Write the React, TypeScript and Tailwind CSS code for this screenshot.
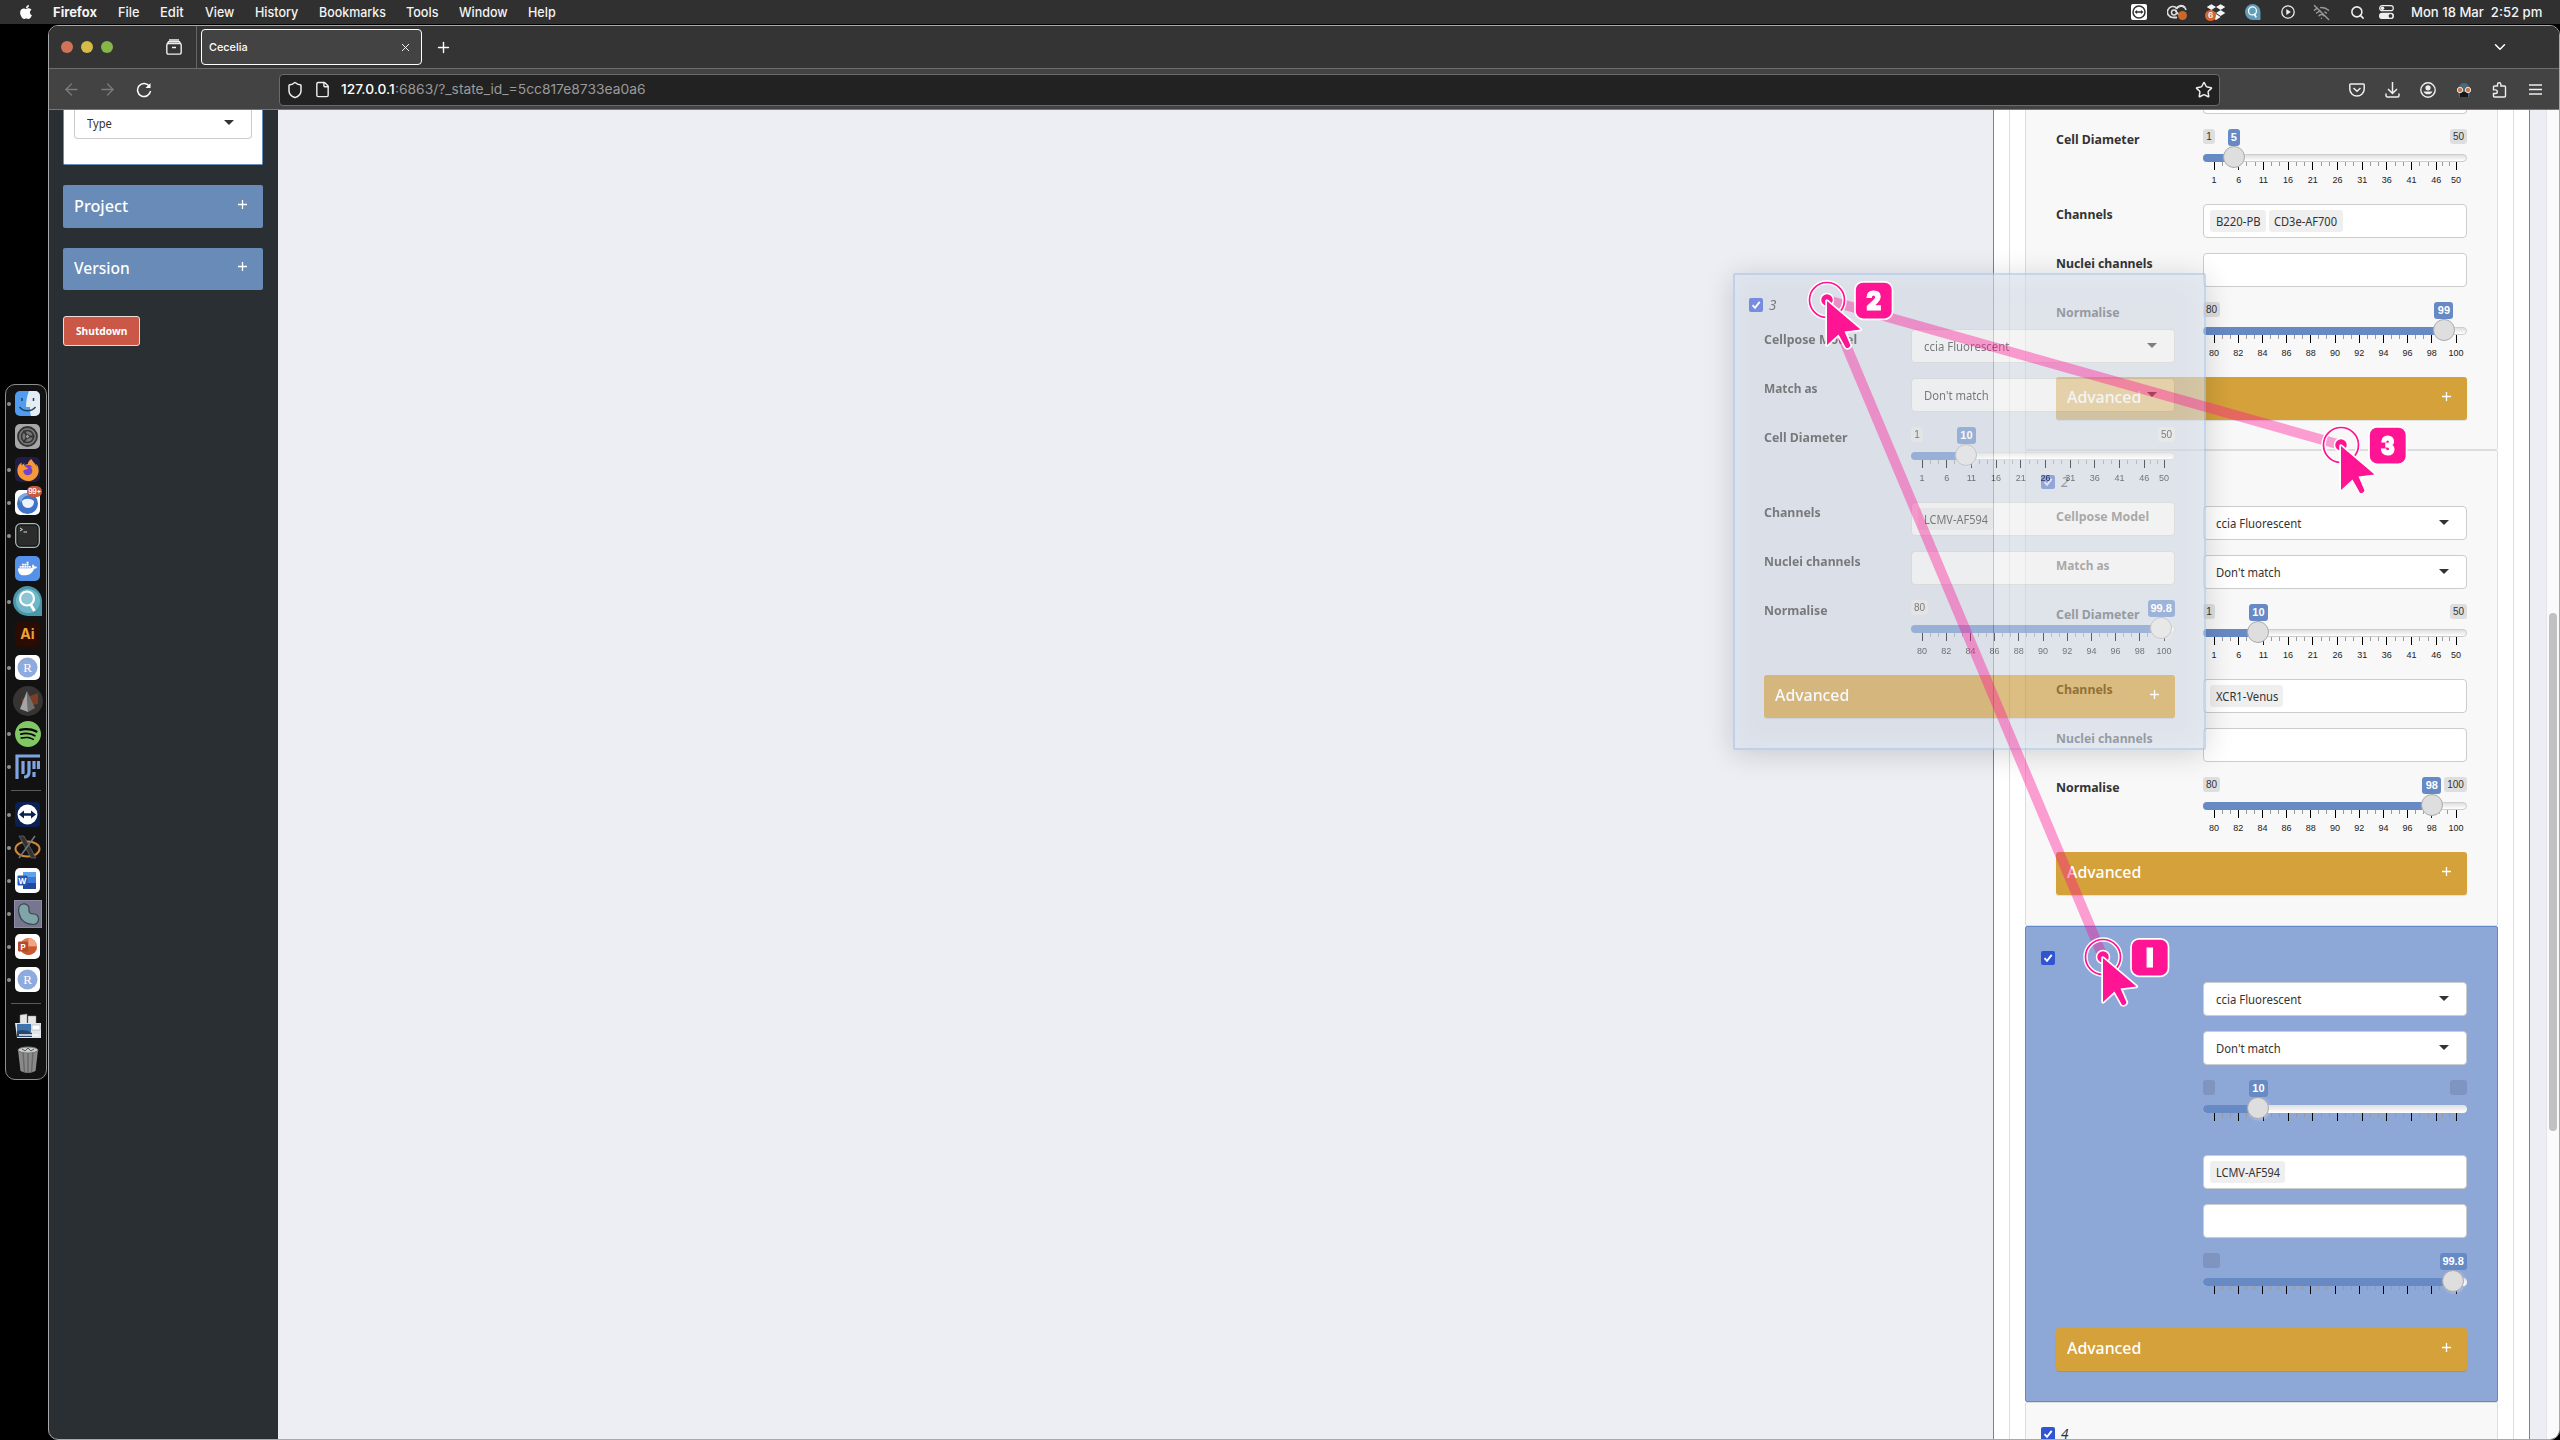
import React, { useLayoutEffect, useRef, useState } from 'react';
import { SiFirefoxbrowser, SiDocker, SiSpotify } from 'react-icons/si';
import { FaApple, FaDropbox } from 'react-icons/fa';
import {
  ArrowLeft, ArrowRight, ChevronDown, File, Plus, Search, Shield, Star, X, WifiOff,
} from 'lucide-react';

/* Text squeezed or stretched horizontally so that it fills a given width. */
function Fit({ w, className = '', children }: { w: number; className?: string; children: React.ReactNode }) {
  const ref = useRef<HTMLSpanElement>(null);
  const [scale, setScale] = useState(1);
  useLayoutEffect(() => {
    const measure = () => {
      if (ref.current && ref.current.offsetWidth) setScale(w / ref.current.offsetWidth);
    };
    measure();
    document.fonts.ready.then(measure);
  }, [w]);
  return (
    <span className={`block shrink-0 ${className}`} style={{ width: w }}>
      <span ref={ref} className="inline-block origin-left whitespace-pre" style={{ transform: `scaleX(${scale})` }}>
        {children}
      </span>
    </span>
  );
}

const menus: [string, number][] = [
  ['File', 21.5], ['Edit', 24], ['View', 29.5], ['History', 43.5], ['Bookmarks', 67],
  ['Tools', 32], ['Window', 49], ['Help', 28],
];

function MenuBar() {
  return (
    <div className="flex h-6 shrink-0 items-center bg-[#303030] pl-[19px] pr-[18px] font-['Inter'] text-[13px] leading-6 text-[#f4f4f4]">
      <FaApple className="mr-[20px] h-[16px] w-[14px] text-white" />
      <Fit w={44} className="mr-[21px] font-bold">Firefox</Fit>
      <div className="flex gap-[20.5px] font-medium">
        {menus.map(([t, w]) => <Fit key={t} w={w}>{t}</Fit>)}
      </div>
      <div className="ml-auto flex items-center">
        <svg className="mr-5 h-4 w-4" viewBox="0 0 16 16">
          <rect width="16" height="16" rx="2" fill="#fff" />
          <circle cx="8" cy="8" r="6" fill="none" stroke="#303030" strokeWidth="1.5" />
          <path d="M3.500 8l2.600-2v1.300h3.800V6l2.600 2-2.600 2V8.700H6.100V10z" fill="#303030" />
        </svg>
        <svg className="mr-[18px] h-4 w-[21px]" viewBox="0 0 21 16">
          <path d="M6 13.500a5.500 5.500 0 1 1 4-9.200A5 5 0 0 1 19 6" fill="none" stroke="#ddd" strokeWidth="1.600" />
          <path d="M9 5a5.500 5.500 0 0 1 9-1.500M10 13.500H6" fill="none" stroke="#ddd" strokeWidth="1.800" />
          <circle cx="7" cy="8.500" r="2.500" fill="none" stroke="#ddd" strokeWidth="1.500" />
          <path d="M8 6l4 5" stroke="#ddd" strokeWidth="1.500" />
          <circle cx="15.500" cy="11.500" r="4.500" fill="#c9682a" />
        </svg>
        <div className="relative mr-[19px] h-[18px] w-[20px]">
          <FaDropbox className="absolute left-0 top-0 h-[18px] w-[20px]" />
          <span className="absolute -left-[1px] top-[7px] h-[11px] w-[11px] rounded-full bg-[#d0652f] text-center text-[8px] font-bold leading-[11px]">6</span>
        </div>
        <svg className="mr-[20px] h-4 w-4" viewBox="0 0 30 30">
          <path d="M15 0a15 15 0 1 0 0 30h14V15A15 15 0 0 0 15 0z" fill="#5f9dba" />
          <circle cx="14" cy="13" r="7.500" fill="none" stroke="#fff" strokeWidth="2.500" />
          <path d="M17 18l4 7" stroke="#fff" strokeWidth="3" />
        </svg>
        <svg className="mr-[18px] h-[14px] w-[14px]" viewBox="0 0 14 14">
          <circle cx="7" cy="7" r="6.200" fill="none" stroke="#eee" strokeWidth="1.300" />
          <path d="M5.300 4l4.500 3-4.500 3z" fill="#eee" />
        </svg>
        <WifiOff className="mr-[20px] h-[17px] w-[17px] text-[#999]" strokeWidth={2} />
        <Search className="mr-[14px] h-[15px] w-[15px] text-[#eee]" strokeWidth={2.5} />
        <svg className="mr-[17px] h-[14px] w-[15px]" viewBox="0 0 15 14">
          <rect x=".7" y=".7" width="13.600" height="5" rx="2.500" fill="none" stroke="#eee" strokeWidth="1.200" />
          <circle cx="3.500" cy="3.200" r="1.800" fill="#eee" />
          <rect x="0" y="7.800" width="15" height="6.200" rx="3.100" fill="#eee" />
          <circle cx="11.500" cy="10.900" r="1.900" fill="#303030" />
        </svg>
        <Fit w={131} className="font-medium">Mon 18 Mar  2:52 pm</Fit>
      </div>
    </div>
  );
}

/* ---------- Dock ---------- */

const RStudio = () => (
  <svg viewBox="0 0 25 25" className="h-[25px] w-[25px]">
    <rect width="25" height="25" rx="5" fill="#fff" />
    <circle cx="12.500" cy="12.500" r="10" fill="#8faadc" />
    <text x="12.500" y="17" textAnchor="middle" fontSize="13" fill="#fff" fontFamily="Liberation Serif">R</text>
  </svg>
);

const dockApps: { dot: boolean; icon: React.ReactNode }[] = [
  { dot: true, icon: (
    <svg viewBox="0 0 25 25" className="h-[25px] w-[25px]">
      <rect width="25" height="25" rx="5" fill="#4f9cf0" />
      <path d="M14 0h6a5 5 0 0 1 5 5v15a5 5 0 0 1-5 5h-4c-1-3-1-6-1-9h-4c0-6 1-11 3-16z" fill="#e4ecf4" />
      <path d="M4.500 16c4 5 12 5 16 0" fill="none" stroke="#22415f" strokeWidth="1.300" />
      <path d="M7 7v3M18.500 7v3" stroke="#22415f" strokeWidth="1.500" />
    </svg>) },
  { dot: false, icon: (
    <svg viewBox="0 0 25 25" className="h-[25px] w-[25px]">
      <rect width="25" height="25" rx="5" fill="#a5a7a8" />
      <circle cx="12.500" cy="12.500" r="9.500" fill="#777" stroke="#333" strokeWidth="1.800" />
      <circle cx="12.500" cy="12.500" r="6" fill="none" stroke="#333" strokeWidth="1.600" />
      <path d="M12.500 12.500h7M12.500 12.500l-4-6M12.500 12.500l-4 6" stroke="#333" strokeWidth="1.800" />
      <circle cx="12.500" cy="12.500" r="2" fill="#999" stroke="#333" />
    </svg>) },
  { dot: true, icon: (
    <div className="flex h-[25px] w-[25px] items-center justify-center rounded-[5px] bg-[#221d45]">
      <div className="relative h-[22px] w-[22px]">
        <div className="absolute left-[4px] top-[5px] h-[14px] w-[14px] rounded-full bg-[#7542c9]" />
        <SiFirefoxbrowser className="relative h-[22px] w-[22px] text-[#f79a35]" />
      </div>
    </div>) },
  { dot: true, icon: (
    <div className="relative h-[25px] w-[25px]">
      <svg viewBox="0 0 25 25" className="h-[25px] w-[25px]">
        <rect width="25" height="25" rx="5" fill="#fff" />
        <circle cx="12.500" cy="13.500" r="10.500" fill="#3f74c8" />
        <path d="M3 8c4-6 10-5 13-3-5 0-9 2-10 8z" fill="#7ba9e6" />
        <path d="M7 11c3-3 8-3 12 0 0 4-2 7-6 7s-6-3-6-7z" fill="#eef4fb" />
      </svg>
      <span className="absolute -right-[2px] -top-[4px] h-[11px] w-[15px] rounded-full bg-[#c65b3d] text-center font-['Inter'] text-[7px] font-semibold leading-[11px] tracking-tighter text-white">99+</span>
    </div>) },
  { dot: true, icon: (
    <svg viewBox="0 0 25 25" className="h-[25px] w-[25px]">
      <rect x=".7" y=".7" width="23.600" height="23.600" rx="5" fill="#111" stroke="#a9b8b8" strokeWidth="1.300" />
      <rect x="2.500" y="2.500" width="20" height="20" rx="3" fill="#2c2c2c" />
      <path d="M5 5l2.500 1.500L5 8M8.500 9h3.500" fill="none" stroke="#ddd" strokeWidth="1" />
    </svg>) },
  { dot: false, icon: (
    <div className="flex h-[25px] w-[25px] items-center justify-center rounded-[5px] bg-[#5591e8]">
      <SiDocker className="h-[19px] w-[19px] text-white" />
    </div>) },
  { dot: true, icon: (
    <svg viewBox="0 0 30 30" className="-mt-[2px] h-[30px] w-[30px]">
      <path d="M15 0a15 15 0 1 0 0 30h14V15A15 15 0 0 0 15 0z" fill="#4b96ab" />
      <circle cx="15" cy="15" r="12" fill="#6fb7c6" />
      <circle cx="14" cy="12.500" r="7" fill="#8cc6d4" stroke="#fff" strokeWidth="2.200" />
      <path d="M18 19l3.500 6" stroke="#fff" strokeWidth="2.800" />
    </svg>) },
  { dot: false, icon: (
    <div className="h-[25px] w-[25px] rounded-[5px] bg-[#2b0c04] text-center font-['Inter'] text-[14px] font-bold leading-[24px] text-[#f0a035]">Ai</div>) },
  { dot: true, icon: <RStudio /> },
  { dot: false, icon: (
    <svg viewBox="0 0 30 30" className="h-[30px] w-[30px]">
      <circle cx="15" cy="15" r="15" fill="#363433" />
      <path d="M9 13l16-6v11L9 21z" fill="#7c3d26" />
      <path d="M14 5L7 23l8 3z" fill="#a3a5a6" />
      <path d="M14 5l8 17-7 4z" fill="#6c6e70" />
    </svg>) },
  { dot: true, icon: (
    <div className="flex h-[25px] w-[25px] items-center justify-center rounded-full bg-black">
      <SiSpotify className="h-[26px] w-[26px] shrink-0 text-[#81c763]" />
    </div>) },
  { dot: true, icon: (
    <svg viewBox="0 0 25 25" className="h-[25px] w-[25px]" fill="none" stroke="#7fa4e0" strokeWidth="3.200">
      <path d="M25 2H2v23M8 7v13M14 7v11q0 5-5 5M19 7v8M23.500 7v8M19 18v5" />
    </svg>) },
];

const dockRecent: React.ReactNode[] = [
  <svg viewBox="0 0 25 25" className="h-[25px] w-[25px]">
    <rect width="25" height="25" rx="4" fill="#0c1f52" />
    <circle cx="12.500" cy="12.500" r="10" fill="#fff" />
    <path d="M4 12.500l5-4v2.700h7V8.500l5 4-5 4v-2.700H9v2.700z" fill="#0c1f52" />
  </svg>,
  <svg viewBox="0 0 27 25" className="h-[25px] w-[27px]">
    <ellipse cx="13.500" cy="14" rx="12" ry="7.500" fill="none" stroke="#cf8a3c" strokeWidth="2" />
    <path d="M5 1h5l12 22h-5z" fill="#333" stroke="#777" strokeWidth=".6" />
    <path d="M21 1L5 23" stroke="#777" strokeWidth="1.500" />
  </svg>,
  <svg viewBox="0 0 25 25" className="h-[25px] w-[25px]">
    <rect width="25" height="25" rx="5" fill="#fff" />
    <rect x="8" y="4" width="13" height="17" rx="1" fill="#3c78d8" />
    <path d="M8 4h13v5H8z" fill="#5ea3ea" />
    <path d="M8 15h13v6H8z" fill="#234a9c" />
    <rect x="2.500" y="7.500" width="10" height="10" rx="1" fill="#2458b5" />
    <text x="7.500" y="15.500" textAnchor="middle" fontSize="8" fontWeight="700" fill="#fff" fontFamily="Inter">W</text>
  </svg>,
  <svg viewBox="0 0 28 28" className="h-[28px] w-[28px]">
    <rect x=".5" y=".5" width="27" height="27" fill="#77768f" stroke="#8e8da6" />
    <path d="M9 4C13 3.500 15.500 6 15 10C14.700 13 16.500 14 20 14C26 14 26.500 24 19 24.500C12 24.500 6.500 20.500 5 13.500C4 8 5 4.500 9 4Z" fill="#7fa5a8" stroke="#38454a" strokeWidth="1.200" />
  </svg>,
  <svg viewBox="0 0 25 25" className="h-[25px] w-[25px]">
    <rect width="25" height="25" rx="5" fill="#fff" />
    <circle cx="13.500" cy="12.500" r="8.500" fill="#dd7a50" />
    <path d="M13.500 12.500V4a8.500 8.500 0 0 1 8.500 8.500z" fill="#f0a483" />
    <path d="M22 12.500a8.500 8.500 0 0 1-17 0z" fill="#c75a30" />
    <rect x="3" y="7.500" width="10" height="10" rx="1" fill="#b5492a" />
    <text x="8" y="15.500" textAnchor="middle" fontSize="8" fontWeight="700" fill="#fff" fontFamily="Inter">P</text>
  </svg>,
  <RStudio />,
];

function DockCell({ dot, children }: { dot: boolean; children: React.ReactNode }) {
  return (
    <div className="relative flex h-[33px] w-full shrink-0 items-center justify-center pl-[3px]">
      {dot && <span className="absolute left-[1px] top-[15px] h-[4px] w-[4px] rounded-full bg-[#8f8f8f]" />}
      {children}
    </div>
  );
}

function Dock() {
  return (
    <div className="ml-[5px] mt-[360px] flex h-[696px] w-[42px] shrink-0 flex-col items-center rounded-[10px] border border-[#8d8d8d] bg-[#121212] pt-[2px]">
      {dockApps.map((a, i) => <DockCell key={i} dot={a.dot}>{a.icon}</DockCell>)}
      <div className="flex h-[15px] items-center"><div className="h-px w-[30px] bg-[#5a5a5a]" /></div>
      {dockRecent.map((a, i) => <DockCell key={i} dot>{a}</DockCell>)}
      <div className="flex h-[14px] items-center"><div className="h-px w-[30px] bg-[#5a5a5a]" /></div>
      <DockCell dot={false}>
        <svg viewBox="0 0 26 26" className="-mt-[2px] h-[26px] w-[26px]">
          <path d="M5 2l7-1v12H5zM13 3h8v11h-8z" fill="#e6e6e6" stroke="#888" strokeWidth=".5" />
          <path d="M0 10h26v15H2z" fill="#dfe6ee" />
          <path d="M2 11h14v8H2z" fill="#3f73ad" />
          <path d="M17 12h8v5h-8z" fill="#fff" stroke="#999" strokeWidth=".5" />
          <path d="M2 18q8-3 15 2v4H2z" fill="#27476b" />
          <path d="M4 22h20" stroke="#f5f5f5" strokeWidth="1.500" />
        </svg>
      </DockCell>
      <DockCell dot={false}>
        <svg viewBox="0 0 22 28" className="mt-px h-[28px] w-[22px]">
          <path d="M1 4h20l-2.500 21q-7.500 4-15 0z" fill="#8a8a8a" />
          <path d="M6 6l1.500 20M11 6v21M16 6l-1.500 20" stroke="#6a6a6a" strokeWidth="1.500" />
          <ellipse cx="11" cy="4" rx="10" ry="3" fill="#c9cdc9" stroke="#777" />
          <path d="M5 3l3 2 3-3 3 3 3-2" stroke="#4b5d50" fill="none" />
        </svg>
      </DockCell>
    </div>
  );
}

/* ---------- Browser chrome ---------- */

function TabBar() {
  return (
    <div className="flex h-[43px] shrink-0 items-center border-b border-[#6d6d6d] bg-[#343434] text-white">
      <div className="flex h-full w-[148px] items-center border-r border-[#666] pl-[12px]">
        <span className="h-3 w-3 rounded-full bg-[#cf7458]" />
        <span className="ml-2 h-3 w-3 rounded-full bg-[#d6bb47]" />
        <span className="ml-2 h-3 w-3 rounded-full bg-[#86b548]" />
        <svg viewBox="0 0 16 16" className="ml-[53px] h-4 w-4" fill="none" stroke="#eee" strokeWidth="1.400">
          <rect x=".8" y="4.500" width="14.400" height="10.600" rx="1.500" />
          <path d="M3 1h10M1.500 4.500l1-1.700h11l1 1.700M6 8.500h4" />
        </svg>
      </div>
      <div className="ml-[4px] flex h-9 w-[221px] items-center rounded-[4px] border-[1.5px] border-white bg-[#434343] pl-[7px] font-['Inter'] text-[11px] font-medium">
        <Fit w={38.5} className="pt-px">Cecelia</Fit>
        <X className="ml-auto mr-[9px] h-[13px] w-[13px]" strokeWidth={1.7} />
      </div>
      <Plus className="ml-[13px] h-[17px] w-[17px]" strokeWidth={2} />
      <ChevronDown className="ml-auto mr-[50px] h-[18px] w-[18px]" strokeWidth={2} />
    </div>
  );
}

function NavBar() {
  return (
    <div className="flex h-[41px] shrink-0 items-center border-b border-[#777] bg-[#434343] pt-px text-[#eee]">
      <ArrowLeft className="ml-[13px] h-[19px] w-[19px] text-[#7b7b7b]" strokeWidth={1.6} />
      <ArrowRight className="ml-[17px] h-[19px] w-[19px] text-[#7b7b7b]" strokeWidth={1.6} />
      <svg viewBox="0 0 16 16" className="ml-[19px] h-4 w-4" fill="none" stroke="#fff" strokeWidth="1.500">
        <path d="M13.500 4.500A6.500 6.500 0 1 0 14.500 9" />
        <path d="M14.500 1v5h-5z" fill="#fff" stroke="none" />
      </svg>
      <div className="ml-[127px] flex h-8 w-[1941px] items-center rounded-[4px] border border-[#6a6a6a] bg-[#222] pl-[6px] pr-[6px] font-['Inter'] text-[13px]">
        <Shield className="h-[18px] w-[18px]" strokeWidth={2} />
        <File className="ml-[10px] h-[17px] w-[17px]" strokeWidth={2} />
        <Fit w={54} className="ml-[9.5px] font-medium text-white">127.0.0.1</Fit>
        <Fit w={251} className="text-[#9a9a9a]">:6863/?_state_id_=5cc817e8733ea0a6</Fit>
        <Star className="ml-auto h-[18px] w-[18px]" strokeWidth={2} />
      </div>
      <div className="ml-auto mr-[17px] flex items-center gap-[20px]">
        <svg viewBox="0 0 16 14" className="h-[14px] w-4" fill="none" stroke="#eee" strokeWidth="1.500">
          <path d="M1.500 1h13q.7 0 .7.800V6a7.200 7 0 0 1-14.400 0V1.800q0-.8.700-.8z" />
          <path d="M4.500 5l3.500 3.200L11.500 5" />
        </svg>
        <svg viewBox="0 0 15 16" className="h-4 w-[15px]" fill="none" stroke="#eee" strokeWidth="1.500">
          <path d="M7.500 0v11M3 7l4.500 4.500L12 7M1 11.500v2q0 1.500 1.500 1.500h10q1.500 0 1.500-1.500v-2" />
        </svg>
        <svg viewBox="0 0 16 16" className="h-4 w-4">
          <circle cx="8" cy="8" r="7.200" fill="none" stroke="#eee" strokeWidth="1.400" />
          <circle cx="8" cy="5.800" r="2.600" fill="#eee" />
          <path d="M3.500 9.500h9a4.800 4.300 0 0 1-9 0z" fill="#eee" />
        </svg>
        <svg viewBox="0 0 16 16" className="h-4 w-4">
          <path d="M2 8a6 7 0 0 1 12 0l-1 7H3z" fill="#4a6a7c" />
          <path d="M4 10h8v5H4z" fill="#15181b" />
          <circle cx="4" cy="8" r="2.700" fill="#c9784d" stroke="#e8e0da" strokeWidth="1" />
          <circle cx="12" cy="8" r="2.700" fill="#c9784d" stroke="#e8e0da" strokeWidth="1" />
        </svg>
        <svg viewBox="0 0 14 16" className="h-4 w-[15px]" fill="none" stroke="#eee" strokeWidth="1.400">
          <path d="M1 6.500V5q0-1 1-1h3V2.500a1.700 1.700 0 0 1 3.400 0V4H12q1 0 1 1v9q0 1-1 1H2q-1 0-1-1v-2.500h2a1.800 1.800 0 0 0 0-3.600H1z" />
        </svg>
        <svg viewBox="0 0 13 12" className="ml-[2px] h-3 w-[13px]" stroke="#eee" strokeWidth="1.300">
          <path d="M0 1h13M0 5.500h13M0 10h13" />
        </svg>
      </div>
    </div>
  );
}

/* ---------- Sidebar ---------- */

const Caret = ({ className = '' }: { className?: string }) => (
  <svg viewBox="0 0 10 5" className={`h-[5px] w-[10px] ${className}`}><path d="M0 0h10L5 5z" fill="#333" /></svg>
);

const PlusMark = ({ className = '' }: { className?: string }) => (
  <svg viewBox="0 0 9 9" className={`h-[9px] w-[9px] ${className}`}><path d="M4.500 0v9M0 4.500h9" stroke="#fff" strokeWidth="1.300" /></svg>
);

function SideBox({ title, w, className }: { title: string; w: number; className: string }) {
  return (
    <div className={`mt-[20px] flex items-center justify-between rounded-[2px] bg-[#688bb8] pl-[11px] pr-[16px] text-[16.5px] font-medium text-white ${className}`}>
      <Fit w={w} className="-mt-px">{title}</Fit>
      <PlusMark className="-mt-[5px]" />
    </div>
  );
}

function Sidebar() {
  return (
    <div className="flex w-[229px] shrink-0 flex-col bg-[#2a2f33] pl-[14px] pr-[15px] font-['Noto_Sans'] text-[#333]">
      <div className="h-[55px] rounded-b-[2px] border border-t-0 border-[#688bb8] bg-white px-[10px]">
        <div className="flex h-[29px] items-center justify-between rounded-b-[4px] border border-t-0 border-[#ccc] pb-[1px] pl-[12px] pr-[17px] text-[13px]">
          <Fit w={25}>Type</Fit>
          <Caret className="-mt-[3px]" />
        </div>
      </div>
      <SideBox title="Project" w={54} className="h-[43px]" />
      <SideBox title="Version" w={55.5} className="h-[42px]" />
      <div className="mt-[26px] flex h-[30px] w-[77px] items-center justify-center rounded-[3px] border border-[#eedcd8] bg-[#cb5847] text-[11px] font-bold text-white">
        <Fit w={51}>Shutdown</Fit>
      </div>
    </div>
  );
}

/* ---------- Model cards ---------- */

type Tone = 'plain' | 'drag' | 'ghost';
type SliderSpec = { labels: number[]; value: string; pos: number; min: string; max?: string };

const bubble = "absolute top-0 rounded-[3px] text-center font-['Liberation_Sans']";

function Slider({ s, tone }: { s: SliderSpec; tone: Tone }) {
  const ghost = tone === 'ghost';
  const first = s.labels[0];
  const span = s.labels[s.labels.length - 1] - first;
  const at = (v: number) => 11 + (242 * (v - first)) / span;
  const x = 11 + 242 * s.pos;
  const half = s.value.length > 2 ? 13.5 : s.value.length > 1 ? 9.5 : 6.2;
  const left = Math.min(x - half, 264 - half * 2);
  const gray = ghost ? 'bg-[#7f94bf]' : 'bg-[#dedede] text-[#333]';
  return (
    <div className="relative h-[75px] w-[264px]">
      <div className={`${bubble} left-0 h-[15px] px-[3px] text-[10px] leading-[15px] ${gray} ${s.min.length > 1 ? 'w-[17px]' : 'w-[12px]'}`}>{ghost ? '' : s.min}</div>
      {s.max && <div className={`${bubble} right-0 h-[15px] px-[3px] text-[10px] leading-[15px] ${gray} ${s.max.length > 2 ? 'w-[23px]' : 'w-[17px]'}`}>{ghost ? '' : s.max}</div>}
      <div className={`${bubble} z-10 h-[17px] bg-[#678ac5] text-[11px] font-bold leading-[17px] text-white`} style={{ left, width: half * 2 }}>{s.value}</div>
      <div className={`absolute left-0 top-[25px] h-[8px] w-full overflow-hidden rounded-[4px] bg-linear-to-b from-[#dedede] to-white ${ghost ? '' : 'border border-[#ccc]'}`} />
      <div className="absolute left-0 top-[25px] h-[8px] rounded-l-[4px] bg-[#678ac5]" style={{ width: x }} />
      {s.labels.map((v, i) => (
        <React.Fragment key={v}>
          <span className="absolute top-[33px] h-[8px] w-px bg-black" style={{ left: Math.floor(at(v)) }} />
          {i < s.labels.length - 1 && [1, 2].map((k) => (
            <span key={k} className="absolute top-[33px] h-[4px] w-px bg-[#999]" style={{ left: Math.floor(at(v + ((s.labels[i + 1] - v) * k) / 3)) }} />
          ))}
          {!ghost && (
            <span className="absolute top-[46px] w-[30px] text-center font-['Liberation_Sans'] text-[9px] leading-[11px] text-[#222]" style={{ left: at(v) - 15 }}>{v}</span>
          )}
        </React.Fragment>
      ))}
      <span className="absolute top-[17px] h-[22px] w-[22px] rounded-full border border-[#aaa] bg-[#dedede] shadow-[1px_1px_3px_rgba(255,255,255,0.3)]" style={{ left: x - 11 }} />
    </div>
  );
}

function Row({ label, w, tall, tone, children }: { label: string; w: number; tall?: boolean; tone: Tone; children?: React.ReactNode }) {
  return (
    <div className={`flex shrink-0 ${tall ? 'h-[75px]' : 'h-[49px]'}`}>
      <div className="w-[147px] text-[13px] font-bold leading-[21px]">
        {tone !== 'ghost' && <Fit w={w}>{label}</Fit>}
      </div>
      {children}
    </div>
  );
}

function Box({ tone, children }: { tone: Tone; children?: React.ReactNode }) {
  return (
    <div className={`flex h-[34px] w-[264px] items-center rounded-[4px] border border-[#ccc] text-[13px] ${tone === 'drag' ? 'bg-[#eeeeee]' : 'bg-white'}`}>
      {children}
    </div>
  );
}

const diam = [1, 6, 11, 16, 21, 26, 31, 36, 41, 46, 50];
const pct = [80, 82, 84, 86, 88, 90, 92, 94, 96, 98, 100];

type CardSpec = {
  n: string; tone: Tone; d: string; dPos: number; norm: string; normPos: number; max?: string; chips: [string, number][];
};

function Check() {
  return (
    <svg viewBox="0 0 14 14" className="h-[14px] w-[14px]">
      <rect width="14" height="14" rx="2" fill="#3154d3" />
      <path d="M3.500 7.200l2.500 2.600 4.700-6" fill="none" stroke="#fff" strokeWidth="1.900" />
    </svg>
  );
}

function CardHead({ c }: { c: CardSpec }) {
  return (
    <div className={`-ml-[15px] flex shrink-0 items-start ${c.tone === 'drag' ? 'h-[54px] pt-[23px]' : 'h-[55px] pt-[24px]'}`}>
      <Check />
      {c.tone !== 'ghost' && <span className="ml-[6px] text-[13.5px] italic leading-[14px]">{c.n}</span>}
    </div>
  );
}

function SelectRow({ label, w, value, vw, tone }: { label: string; w: number; value: string; vw: number; tone: Tone }) {
  return (
    <Row label={label} w={w} tone={tone}>
      <Box tone={tone}>
        <Fit w={vw} className="ml-[12px] pt-px">{value}</Fit>
        <Caret className="-mt-[2px] ml-auto mr-[17px]" />
      </Box>
    </Row>
  );
}

function CardBody({ c }: { c: CardSpec }) {
  const t = c.tone;
  return (
    <>
      <Row label="Cell Diameter" w={83.5} tall tone={t}>
        <Slider tone={t} s={{ labels: diam, value: c.d, pos: c.dPos, min: '1', max: '50' }} />
      </Row>
      <Row label="Channels" w={57} tone={t}>
        <Box tone={t}>
          <div className="ml-[6px] flex gap-[3px]">
            {c.chips.map(([name, w]) => (
              <div key={name} className={`flex h-[22px] items-center rounded-[3px] px-[5.5px] ${t === 'drag' ? 'bg-[#dfdfdf]' : 'bg-[#efefef]'}`}>
                <Fit w={w} className="pt-px">{name}</Fit>
              </div>
            ))}
          </div>
        </Box>
      </Row>
      <Row label="Nuclei channels" w={97} tone={t}><Box tone={t} /></Row>
      <Row label="Normalise" w={63.5} tall tone={t}>
        <Slider tone={t} s={{ labels: pct, value: c.norm, pos: c.normPos, min: '80', max: c.max }} />
      </Row>
      <div className={`flex h-[43px] w-[411px] shrink-0 items-center justify-between rounded-[3px] pl-[11px] pr-[16px] text-[16.5px] font-medium text-white shadow-[0_1px_1px_rgba(0,0,0,0.1)] ${t === 'drag' ? 'bg-[#c89739]' : 'bg-[#d4a13a]'}`}>
        <Fit w={74} className="-mt-[2px]">Advanced</Fit>
        <PlusMark className="-mt-[5px]" />
      </div>
    </>
  );
}

const frame = 'flex w-[473px] shrink-0 flex-col rounded-[2px] border text-[#333]';

function Card({ c, className }: { c: CardSpec; className: string }) {
  return (
    <div className={`${frame} ${className}`}>
      <CardHead c={c} />
      <SelectRow label="Cellpose Model" w={93} value="ccia Fluorescent" vw={85} tone={c.tone} />
      <SelectRow label="Match as" w={54} value="Don't match" vw={65} tone={c.tone} />
      <CardBody c={c} />
    </div>
  );
}

const card1: CardSpec = { n: '1', tone: 'plain', d: '5', dPos: 4 / 49, norm: '99', normPos: 0.95, chips: [['B220-PB', 44.5], ['CD3e-AF700', 63]] };
const card2: CardSpec = { n: '2', tone: 'plain', d: '10', dPos: 9 / 49, norm: '98', normPos: 0.9, max: '100', chips: [['XCR1-Venus', 62]] };
const card3: CardSpec = { n: '3', tone: 'ghost', d: '10', dPos: 9 / 49, norm: '99.8', normPos: 0.988, chips: [['LCMV-AF594', 64]] };
const dragged: CardSpec = { ...card3, tone: 'drag' };
const card4: CardSpec = { ...card2, n: '4' };

function Panel() {
  return (
    <div className="ml-auto mr-[16px] w-[537px] overflow-hidden border-x border-[#5f87b8] bg-white px-[15px]">
      <div className="h-full w-[505px] border-x border-[#ddd] px-[15px]">
        <div className={`${frame} h-[340px] rounded-t-none border-t-0 border-[#ddd] bg-[#f8f8f8] pl-[30px]`}>
          <div className="ml-[147px] h-[4px] w-[264px] shrink-0 rounded-b-[4px] border border-t-0 border-[#ccc] bg-white" />
          <div className="h-[15px] shrink-0" />
          <CardBody c={card1} />
        </div>
        <Card c={card2} className="h-[476px] border-[#ddd] bg-[#f8f8f8] pl-[30px]" />
        <Card c={card3} className="h-[476px] border-[#6488c8] bg-[#8da7d7] pl-[30px]" />
        <div className={`${frame} h-[38px] overflow-hidden rounded-b-none border-b-0 border-[#ddd] bg-[#f8f8f8] pl-[30px]`}>
          <CardHead c={card4} />
        </div>
      </div>
    </div>
  );
}

/* ---------- Click annotations ---------- */

function Marker({ x, y, n, w }: { x: number; y: number; n: string; w?: number }) {
  return (
    <g transform={`translate(${x} ${y})`}>
      <circle r="17.500" fill="none" stroke="#fff" strokeWidth="4.500" />
      <circle r="17.500" fill="none" stroke="#ff1493" strokeWidth="1.700" />
      <circle r="6.500" fill="#ff1493" stroke="#fff" strokeWidth="1.500" />
      <path d="M0 1V45L11.500 34.500 18.800 47.500Q22 49 23.500 45.500L17.500 31.500 33.500 29.500Z" fill="#ff1493" stroke="#fff" strokeWidth="3.500" strokeLinejoin="round" />
      <path d="M0 1V45L11.500 34.500 18.800 47.500Q22 49 23.500 45.500L17.500 31.500 33.500 29.500Z" fill="#ff1493" />
      <path d="M14.500 33L20.500 46" stroke="#ff1493" strokeWidth="4" strokeLinecap="round" />
      <rect x="28" y="-18.200" width="37.500" height="37.500" rx="8" fill="#ff1493" stroke="#fff" strokeWidth="1.700" />
      <text x="46.800" y="10" textAnchor="middle" fontFamily="Inter" fontWeight="900" fontSize="26" fill="#fff" stroke="#fff" strokeWidth="1.200" textLength={w} lengthAdjust="spacingAndGlyphs">{n}</text>
    </g>
  );
}

export default function App() {
  return (
    <div className="relative flex h-[1440px] w-[2560px] flex-col overflow-hidden bg-black">
      <MenuBar />
      <div className="flex min-h-0 flex-1">
        <Dock />
        <div className="ml-px mt-px flex flex-1 flex-col overflow-hidden rounded-[10px] border border-[#a9a9a9]">
          <TabBar />
          <NavBar />
          <div className="flex min-h-0 flex-1 bg-[#edeef4] font-['Noto_Sans']">
            <Sidebar />
            <Panel />
            <div className="w-[13px] shrink-0 border-l border-[#e6e6e6] bg-[#fafafa] pl-[2px]">
              <div className="mt-[503px] h-[518px] w-[8px] rounded-full bg-[#c1c1c1]" />
            </div>
          </div>
        </div>
      </div>
      <div className="absolute left-[1733px] top-[273px] font-['Noto_Sans'] opacity-[0.63]">
        <Card c={dragged} className="h-[477px] border-2 border-[#a3bfe4] bg-[#d0d6e1] pl-[29px] shadow-[0_4px_30px_rgba(0,0,0,0.26),inset_0_0_24px_rgba(225,233,245,0.7)]" />
      </div>
      <svg className="pointer-events-none absolute left-0 top-0 h-[1440px] w-[2560px]" viewBox="0 0 2560 1440">
        <path d="M2103 957L1827 300L2341 445" fill="none" stroke="#ff1493" strokeOpacity="0.4" strokeWidth="10" strokeLinejoin="bevel" />
        <Marker x={2103} y={957} n="I" />
        <Marker x={1827} y={300} n="2" w={15} />
        <Marker x={2341} y={445} n="3" w={14} />
      </svg>
    </div>
  );
}
